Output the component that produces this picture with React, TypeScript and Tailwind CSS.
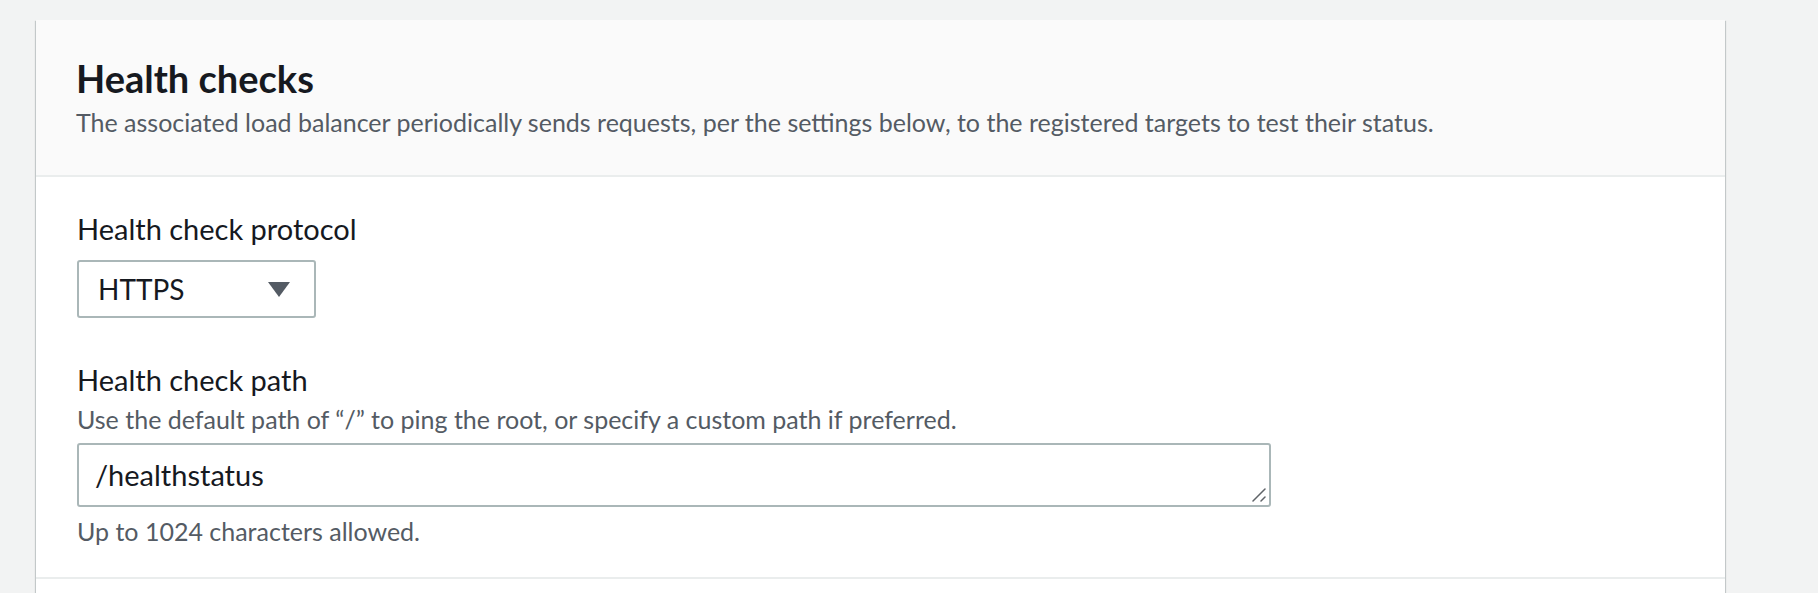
import React from 'react';

const font = { fontFamily: 'Lato, "Open Sans", Arial, sans-serif' };

const App: React.FC = () => {
  return (
    <div className="min-h-screen w-full bg-[#f2f3f3] pl-[36px] pr-[93px] pt-[20px] overflow-hidden" style={font}>
      <div className="bg-white shadow-[0_1px_1px_0_rgba(0,28,36,0.3),1px_1px_1px_0_rgba(0,28,36,0.15),-1px_1px_1px_0_rgba(0,28,36,0.15)]">
        {/* Header */}
        <div className="bg-[#fafafa] border-b-2 border-[#eaeded] px-[40px] pt-[36px] pb-[38px]">
          <h2 className="text-[38px] leading-[44px] font-bold text-[#16191f]">Health checks</h2>
          <p className="mt-[7px] text-[25px] leading-[30px] text-[#545b64]">
            The associated load balancer periodically sends requests, per the settings below, to the registered targets to test their status.
          </p>
        </div>

        {/* Body */}
        <div className="border-b-2 border-[#eaeded] px-[41px] pt-[36px] pb-[32px]">
          <label className="block text-[29px] leading-[32px] text-[#16191f]">Health check protocol</label>
          <div className="mt-[15px] w-[239px] h-[58px] border-2 border-[#aab7b8] rounded-[3px] bg-white flex items-center justify-between pl-[19px] pr-[24px]">
            <span className="text-[28px] text-[#16191f]">HTTPS</span>
            <svg width="22" height="15" viewBox="0 0 22 15">
              <path d="M0 0 H22 L11 15 Z" fill="#545b64" />
            </svg>
          </div>

          <label className="block mt-[46px] text-[29px] leading-[32px] text-[#16191f]">Health check path</label>
          <p className="mt-[9px] text-[25px] leading-[28px] text-[#545b64]">
            Use the default path of “/” to ping the root, or specify a custom path if preferred.
          </p>
          <div className="relative mt-[10px] w-[1194px]">
            <textarea
              readOnly
              rows={1}
              defaultValue="/healthstatus"
              className="block w-full h-[64px] border-2 border-[#aab7b8] rounded-[3px] bg-white px-[16px] py-[12px] text-[29px] leading-[36px] text-[#16191f] outline-none resize-none"
              style={font}
            />
            {/* resize grip */}
            <svg className="absolute right-[3px] bottom-[3px]" width="16" height="16" viewBox="0 0 16 16">
              <path d="M1 13 L13 1 M9 13 L13 9" stroke="#5f6368" strokeWidth="1.5" strokeLinecap="round" />
            </svg>
          </div>
          <p className="mt-[10px] text-[25px] leading-[28px] text-[#545b64]">Up to 1024 characters allowed.</p>
        </div>
        <div className="h-[40px] bg-white" />
      </div>
    </div>
  );
};

export default App;
